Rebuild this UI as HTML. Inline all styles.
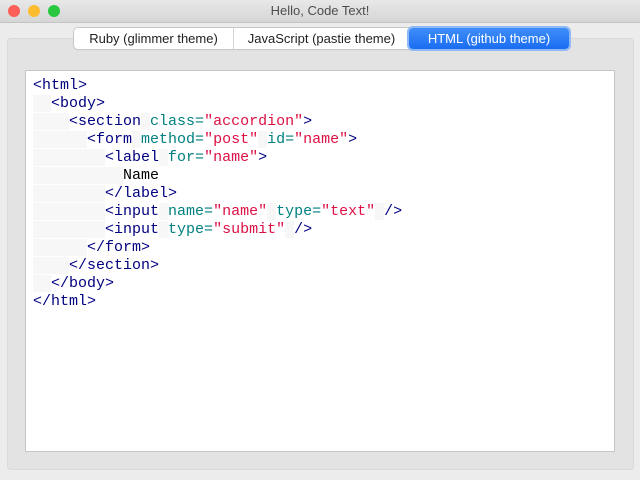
<!DOCTYPE html>
<html><head><style>
body{margin:0;width:640px;height:480px;background:#ececec;font-family:"Liberation Sans",sans-serif;position:relative;overflow:hidden}
.title{position:absolute;top:0;left:0;width:640px;height:22px;background:linear-gradient(#e8e8e8,#d6d6d6);border-bottom:1px solid #c4c4c4;text-align:center;font-size:13px;line-height:22px;color:#4d4d4d}
.dot{position:absolute;top:5px;width:12px;height:12px;border-radius:50%}
.panel{position:absolute;left:7px;top:38px;width:625px;height:430px;background:#e3e3e3;border:1px solid #d9d9d9;border-radius:4px}
.tabs{position:absolute;top:28px;left:74px;height:21px;display:flex;font-size:13px;line-height:21px;border-radius:4px;background:#fff;box-shadow:0 0 0 1px #c8c8c8,0 1px 1px rgba(0,0,0,.15)}
.tabs div{padding:0 0;text-align:center;color:#222}
.sel{background:linear-gradient(#3f8ef8,#1a6df2);color:#fff!important;border-radius:4px;box-shadow:0 0 0 2px #8fb8f6}
.code{position:absolute;left:25px;top:70px;width:588px;height:380px;background:#fff;border:1px solid #c6c6c6}
pre{margin:0;position:absolute;left:7px;top:6px;font-family:"Liberation Mono",monospace;font-size:15px;line-height:18px;color:#000080}
.a{color:#008080}.s{color:#dd1144}.t{color:#000}.w{background:#f7f7f7}
</style></head><body>
<div class="title">Hello, Code Text!
<div class="dot" style="left:8px;background:#fc5f57;border:0"></div>
<div class="dot" style="left:28px;background:#fdbc2e"></div>
<div class="dot" style="left:48px;background:#28c840"></div></div>
<div class="panel"></div>
<div class="tabs">
<div style="width:159px;border-right:1px solid #d4d4d4">Ruby (glimmer theme)</div>
<div style="width:175px">JavaScript (pastie theme)</div>
<div class="sel" style="width:160px">HTML (github theme)</div>
</div>
<div class="code"><pre>&lt;html&gt;
<span class="w">  </span>&lt;body&gt;
<span class="w">    </span>&lt;section<span class="w"> </span><span class="a">class=</span><span class="s">"accordion"</span>&gt;
<span class="w">      </span>&lt;form<span class="w"> </span><span class="a">method=</span><span class="s">"post"</span><span class="w"> </span><span class="a">id=</span><span class="s">"name"</span>&gt;
<span class="w">        </span>&lt;label<span class="w"> </span><span class="a">for=</span><span class="s">"name"</span>&gt;
<span class="w">          </span><span class="t">Name</span>
<span class="w">        </span>&lt;/label&gt;
<span class="w">        </span>&lt;input<span class="w"> </span><span class="a">name=</span><span class="s">"name"</span><span class="w"> </span><span class="a">type=</span><span class="s">"text"</span><span class="w"> </span>/&gt;
<span class="w">        </span>&lt;input<span class="w"> </span><span class="a">type=</span><span class="s">"submit"</span><span class="w"> </span>/&gt;
<span class="w">      </span>&lt;/form&gt;
<span class="w">    </span>&lt;/section&gt;
<span class="w">  </span>&lt;/body&gt;
&lt;/html&gt;</pre></div>
</body></html>
